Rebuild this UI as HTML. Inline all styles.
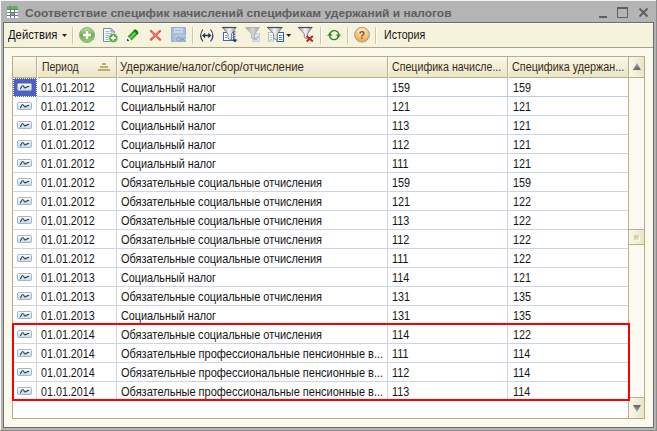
<!DOCTYPE html>
<html lang="ru"><head><meta charset="utf-8"><title>Соответствие специфик</title>
<style>
*{box-sizing:border-box;margin:0;padding:0}
html,body{width:657px;height:431px;overflow:hidden;background:#b4b4b4}
body{font-family:"Liberation Sans",Arial,sans-serif;font-size:12px;color:#141414;position:relative}
.abs{position:absolute}
#frame{position:absolute;left:0;top:0;width:657px;height:431px;background:#b4b4b4}
#hl-top{left:0;top:0;width:656px;height:1px;background:#f4f4f4}
#hl-left{left:0;top:0;width:1px;height:430px;background:#f4f4f4}
#sh-right{left:656px;top:0;width:1px;height:431px;background:#8c8c8c}
#sh-bottom{left:0;top:430px;width:657px;height:1px;background:#8c8c8c}
#inner{left:3px;top:22px;width:651px;height:406px;background:#fbf9ec;border:1px solid #6c6c6c}
#title{left:24.5px;top:5px;font-size:11.5px;font-weight:bold;color:#5e5e5e;white-space:nowrap;line-height:16px;transform-origin:0 0;transform:scaleX(1.04)}
#toolbar{left:4px;top:23px;width:649px;height:24px;background:#f5f2de;border-top:1px solid #fcfbf1}
#tbline{left:4px;top:47px;width:649px;height:1px;background:#aaa27c}
.tbtxt{position:absolute;top:28px;line-height:14px;white-space:nowrap;transform-origin:0 0;transform:scaleX(.9)}
.t{display:inline-block;transform-origin:0 0;transform:scaleX(.9)}
.sep{position:absolute;top:27px;width:2px;height:17px;border-left:1px solid #cfc8a8;border-right:1px solid #fffef8}
#table{left:12px;top:56px;width:633px;height:363px;background:#fff;border:1px solid #b5ad84}
#hdr{left:13px;top:57px;width:615px;height:20px;background:linear-gradient(#f9f6e5,#ebe5c8);border-top:1px solid #fcfbf2}
#hdrline{left:13px;top:77px;width:615px;height:1px;background:#b9b18a}
.hc{position:absolute;top:57px;height:20px;line-height:20px;white-space:nowrap;color:#3a2c14}
.hsep{position:absolute;top:57px;width:2px;height:21px;background:#b9b18a;border-right:1px solid #fbf9ee}
.row{position:absolute;left:13px;width:615px;height:19px;border-bottom:1px solid #cdd6e0}
.c{position:absolute;top:0;height:18px;line-height:20px;white-space:nowrap;overflow:hidden;border-right:1px solid #cdd6e0;padding-left:4px}
.c0{left:0;width:24px;padding:0}
.c1{left:24px;width:80px}
.c2{left:104px;width:271px}
.c3{left:375px;width:120px}
.c4{left:495px;width:120px;border-right:none;padding-left:4.5px}
.r0,.r0 .c{border-color:#b9caec}
.ri{position:absolute;left:4px;top:5px}
.c.sel{background:#4f60c4;outline:1px dotted #fff;outline-offset:-1px;height:19px;border-right:none}
#sb{left:628px;top:57px;width:16px;height:361px;background:#faf9f2;border-left:1px solid #b9b18a;}
.sbb{position:absolute;left:629px;width:15px;background:linear-gradient(90deg,#faf8ea,#e9e4c8)}
#red{left:12px;top:323px;width:618px;height:78px;border:2px solid #fe0000}
</style></head><body>
<div id="frame">
<div class="abs" id="hl-top"></div><div class="abs" id="hl-left"></div><div class="abs" id="sh-right"></div><div class="abs" id="sh-bottom"></div>
<div class="abs" id="inner"></div>
<!-- title icon -->
<svg class="abs" style="left:0;top:0" width="657" height="48" viewBox="0 0 657 48">
<defs>
<linearGradient id="gp" x1="0" y1="0" x2="0" y2="1"><stop offset="0" stop-color="#c0e0a4"/><stop offset="0.5" stop-color="#6cb24a"/><stop offset="1" stop-color="#98d076"/></linearGradient>
<linearGradient id="fn" x1="0" y1="0" x2="1" y2="0"><stop offset="0" stop-color="#8c9298"/><stop offset="0.5" stop-color="#f6f6f6"/><stop offset="1" stop-color="#8c9298"/></linearGradient>
<linearGradient id="fg" x1="0" y1="0" x2="1" y2="0"><stop offset="0" stop-color="#a8a8a8"/><stop offset="0.5" stop-color="#d4d4d4"/><stop offset="1" stop-color="#a8a8a8"/></linearGradient>
<linearGradient id="rg" x1="0" y1="0" x2="0" y2="1"><stop offset="0" stop-color="#ffffff"/><stop offset="1" stop-color="#bcdcf8"/></linearGradient>
<radialGradient id="hq" cx="0.5" cy="0.3" r="0.75"><stop offset="0" stop-color="#fef2dc"/><stop offset="0.5" stop-color="#f8c878"/><stop offset="1" stop-color="#ee9c38"/></radialGradient>
</defs>
<!-- title icon -->
<rect x="6.5" y="5.5" width="12" height="13" rx="1" fill="#fff" stroke="#9cb0cc"/>
<rect x="7" y="6" width="11" height="3" fill="#6cbc3c"/>
<rect x="11" y="13" width="3" height="2" fill="#6cbc3c"/>
<path d="M7 9.500H18M7 12.500H18M7 15.500H18M10.500 6V18M14.500 6V18" stroke="#6c7a8a" fill="none"/>
<!-- window buttons -->
<rect x="599" y="16" width="8" height="2" fill="#5e5e5e"/>
<path d="M617.500 8V17.500H627.500V8" fill="none" stroke="#5e5e5e"/><rect x="617" y="7" width="11" height="2" fill="#5e5e5e"/>
<path d="M639.500 8.500L647.500 16.500M647.500 8.500L639.500 16.500" stroke="#5e5e5e" stroke-width="1.8" fill="none"/>
</svg>
<div class="abs" id="title">Соответствие специфик начислений спецификам удержаний и налогов</div>

<div class="abs" id="toolbar"></div><div class="abs" id="tbline"></div>
<div class="tbtxt" style="left:8px;transform:scaleX(0.938)">Действия</div>
<div class="sep" style="left:72px"></div>
<div class="sep" style="left:192px"></div>
<div class="sep" style="left:320px"></div>
<div class="sep" style="left:347px"></div>
<div class="sep" style="left:375px"></div>
<div class="tbtxt" style="left:384px;transform:scaleX(0.885)">История</div>

<!-- icons -->
<svg class="abs" style="left:0;top:0" width="657" height="48" viewBox="0 0 657 48">
<path d="M62 34H67L64.500 37Z" fill="#2a2418"/>
<!-- add -->
<circle cx="87" cy="35" r="7.500" fill="url(#gp)" stroke="#93a88c"/>
<path d="M87 31V39M83 35H91" stroke="#fff" stroke-width="2.400"/>
<!-- copy -->
<path d="M103.500 28.500H111L114.500 32V41.500H103.500Z" fill="#f4f8fc" stroke="#6c8cb0"/>
<path d="M111 28.500V32H114.500Z" fill="#d4e2f0" stroke="#6c8cb0" stroke-width="0.800"/>
<path d="M105.500 31.500H109.500M105.500 33.500H112M105.500 35.500H109M105.500 37.500H108M105.500 39.500H108" stroke="#a4b8cc"/>
<circle cx="113.250" cy="38" r="4.600" fill="#58a83c" stroke="#d8ecd0" stroke-width="0.800"/>
<path d="M113.250 35.500V40.500M110.750 38H115.750" stroke="#fff" stroke-width="1.800"/>
<!-- pencil -->
<path d="M127.600 36.600L134.600 29.600Q137.500 29.500 138.400 33.400L131.400 40.400Z" fill="#2ea020"/>
<path d="M129.800 38.200L136.300 31.700" stroke="#84e06c" stroke-width="1.400"/>
<path d="M134.600 29.600Q137.500 29.500 138.400 33.400L137.200 34.600L133.400 30.800Z" fill="#1f7a18"/>
<path d="M127.600 36.600L131.400 40.400L127 41Z" fill="#f4fff0"/>
<path d="M127.300 38.600L129.400 40.700L127 41Z" fill="#103810"/>
<!-- delete -->
<path d="M151 31L160 39.600M160 31L151 39.600" stroke="#e25846" stroke-width="2.300" stroke-linecap="round"/>
<path d="M152 32L159 38.600M159 32L152 38.600" stroke="#f08878" stroke-width="0.800"/>
<!-- save -->
<rect x="171.500" y="27.500" width="14" height="14" fill="#a9bdd6" stroke="#98aeca"/>
<rect x="174" y="28" width="9" height="5" fill="#c8d6e6"/><path d="M175 30.500H182" stroke="#a9bdd6"/>
<rect x="175" y="35" width="11" height="7" fill="#b6c8dc"/>
<text x="176" y="41.500" font-family="Liberation Sans, sans-serif" font-weight="bold" font-size="7" fill="#7c94b8" textLength="9.500" lengthAdjust="spacingAndGlyphs">OK</text>
<!-- swap -->
<path d="M203 29.500Q198.300 35.500 203 41.500M210.500 29.500Q215.200 35.500 210.500 41.500" fill="none" stroke="#2c4660" stroke-width="1.150"/>
<path d="M204 35.500H209.500" stroke="#1f3a52" stroke-width="1.500"/>
<path d="M202 35.500L205.200 32.800V38.200ZM211.500 35.500L208.300 32.800V38.200Z" fill="#1f3a52"/>
<!-- filter by value -->
<rect x="223.500" y="32.500" width="10" height="8" fill="#fff" stroke="#3c64b0"/>
<path d="M225 35.500H227M225 37.500H227M231 35.500H232.500M231 37.500H232.500" stroke="#7c98c8"/>
<path d="M222.500 27.500H236L231.500 34V40L228 38.500V34Z" fill="url(#fn)" stroke="#6a7078" stroke-width="0.800"/>
<path d="M222.200 27.500H236.300" stroke="#444c54" stroke-width="1.200"/>
<path d="M234.800 31V40" stroke="#1c2c4c" stroke-dasharray="1.500 1"/>
<path d="M232.300 39.500H237.300L234.800 42.600Z" fill="#1c2c4c"/>
<!-- grey filter -->
<rect x="253" y="33.500" width="6.500" height="8" fill="#dce4ec" stroke="#c8d0d8"/>
<path d="M254.500 38L256 39.500L258.500 36" fill="none" stroke="#9cb4d0" stroke-width="1.200"/>
<path d="M245.500 27.500H259.500L254.500 34V39.500L251.500 38V34Z" fill="url(#fg)" stroke="#a8a8a8" stroke-width="0.800"/>
<!-- filter docs -->
<rect x="268.500" y="32.500" width="5" height="8.500" fill="#fff" stroke="#b4bcc4"/>
<path d="M270 35.500H272M270 37.500H272M270 39.500H272" stroke="#b8ccb0"/>
<rect x="277" y="32.500" width="6.500" height="9" fill="#fff" stroke="#2860b0"/>
<path d="M279 35.500H282.500M279 37.500H282.500M279 39.500H282.500" stroke="#5c88c8"/>
<path d="M267.500 27.500H282L277.300 34V40L273.800 38.500V34Z" fill="url(#fn)" stroke="#6a7078" stroke-width="0.800"/>
<path d="M267.200 27.500H282.300" stroke="#444c54" stroke-width="1.200"/>
<path d="M286.200 34H291.200L288.700 37Z" fill="#2a2418"/>
<!-- filter off -->
<path d="M298.500 27.500H312L307.300 34V39L304.300 37.500V34Z" fill="url(#fn)" stroke="#6a7078" stroke-width="0.800"/>
<path d="M298.200 27.500H312.300" stroke="#444c54" stroke-width="1.200"/>
<path d="M306.700 36L312.800 41.500M312.800 36L306.700 41.500" stroke="#c82018" stroke-width="1.900"/>
<!-- refresh -->
<path d="M329.900 33.700A4.600 4.600 0 0 1 338.800 34.600" fill="none" stroke="#2a8a22" stroke-width="1.400"/>
<path d="M338.500 36.600A4.600 4.600 0 0 1 329.600 35.400" fill="none" stroke="#2a8a22" stroke-width="1.400"/>
<path d="M335.900 34.400H341.100L338.500 37.800Z" fill="#2a8a22"/>
<path d="M327.100 35.800H332.500L329.800 32.400Z" fill="#2a8a22"/>
<!-- help -->
<circle cx="362" cy="34.700" r="7.400" fill="url(#hq)" stroke="#a4a09c"/>
<text x="362" y="39" text-anchor="middle" font-family="Liberation Sans, sans-serif" font-weight="bold" font-size="10.500" fill="#80501e">?</text>
</svg>

<!-- table -->
<div class="abs" id="table"></div>
<div class="abs" id="hdr"></div><div class="abs" id="hdrline"></div>
<div class="hsep" style="left:36px"></div><div class="hsep" style="left:116px"></div><div class="hsep" style="left:387px"></div><div class="hsep" style="left:507px"></div>
<div class="hc" style="left:42px"><span class="t" style="transform:scaleX(0.869)">Период</span></div>
<div class="hc" style="left:120px"><span class="t" style="transform:scaleX(0.948)">Удержание/налог/сбор/отчисление</span></div>
<div class="hc" style="left:392px"><span class="t" style="transform:scaleX(0.887)">Специфика начисле...</span></div>
<div class="hc" style="left:512px"><span class="t" style="transform:scaleX(0.9)">Специфика удержан...</span></div>
<div class="abs" style="left:102px;top:63px;width:4px;height:2px;background:#bcad6c"></div>
<div class="abs" style="left:100px;top:66px;width:8px;height:2px;background:#bcad6c"></div>
<div class="abs" style="left:98px;top:69px;width:12px;height:2px;background:#bcad6c"></div>
<div class="row r0" style="top:78px"><div class="c c0 sel"><svg class="ri" width="15" height="8" viewBox="0 0 16 9" preserveAspectRatio="none"><rect x="0.5" y="0.5" width="15" height="8" rx="1.5" fill="url(#rg)" stroke="#a6aaae"/><path d="M3.2 6.500C4.400 6.500 4.800 2.500 6.200 2.800C7.400 3 7.400 5.700 8.800 5.500C10 5.300 10.500 3.800 13 3.800" fill="none" stroke="#2c4a5c" stroke-width="1.350"/></svg></div><div class="c c1"><span class="t" style="transform:scaleX(0.895)">01.01.2012</span></div><div class="c c2"><span class="t" style="transform:scaleX(0.9)">Социальный налог</span></div><div class="c c3"><span class="t" style="transform:scaleX(0.9)">159</span></div><div class="c c4"><span class="t" style="transform:scaleX(0.9)">159</span></div></div>
<div class="row" style="top:97px"><div class="c c0"><svg class="ri" width="15" height="8" viewBox="0 0 16 9" preserveAspectRatio="none"><rect x="0.5" y="0.5" width="15" height="8" rx="1.5" fill="url(#rg)" stroke="#a6aaae"/><path d="M3.2 6.500C4.400 6.500 4.800 2.500 6.200 2.800C7.400 3 7.400 5.700 8.800 5.500C10 5.300 10.500 3.800 13 3.800" fill="none" stroke="#2c4a5c" stroke-width="1.350"/></svg></div><div class="c c1"><span class="t" style="transform:scaleX(0.895)">01.01.2012</span></div><div class="c c2"><span class="t" style="transform:scaleX(0.9)">Социальный налог</span></div><div class="c c3"><span class="t" style="transform:scaleX(0.9)">121</span></div><div class="c c4"><span class="t" style="transform:scaleX(0.9)">121</span></div></div>
<div class="row" style="top:116px"><div class="c c0"><svg class="ri" width="15" height="8" viewBox="0 0 16 9" preserveAspectRatio="none"><rect x="0.5" y="0.5" width="15" height="8" rx="1.5" fill="url(#rg)" stroke="#a6aaae"/><path d="M3.2 6.500C4.400 6.500 4.800 2.500 6.200 2.800C7.400 3 7.400 5.700 8.800 5.500C10 5.300 10.500 3.800 13 3.800" fill="none" stroke="#2c4a5c" stroke-width="1.350"/></svg></div><div class="c c1"><span class="t" style="transform:scaleX(0.895)">01.01.2012</span></div><div class="c c2"><span class="t" style="transform:scaleX(0.9)">Социальный налог</span></div><div class="c c3"><span class="t" style="transform:scaleX(0.9)">113</span></div><div class="c c4"><span class="t" style="transform:scaleX(0.9)">121</span></div></div>
<div class="row" style="top:135px"><div class="c c0"><svg class="ri" width="15" height="8" viewBox="0 0 16 9" preserveAspectRatio="none"><rect x="0.5" y="0.5" width="15" height="8" rx="1.5" fill="url(#rg)" stroke="#a6aaae"/><path d="M3.2 6.500C4.400 6.500 4.800 2.500 6.200 2.800C7.400 3 7.400 5.700 8.800 5.500C10 5.300 10.500 3.800 13 3.800" fill="none" stroke="#2c4a5c" stroke-width="1.350"/></svg></div><div class="c c1"><span class="t" style="transform:scaleX(0.895)">01.01.2012</span></div><div class="c c2"><span class="t" style="transform:scaleX(0.9)">Социальный налог</span></div><div class="c c3"><span class="t" style="transform:scaleX(0.9)">112</span></div><div class="c c4"><span class="t" style="transform:scaleX(0.9)">121</span></div></div>
<div class="row" style="top:154px"><div class="c c0"><svg class="ri" width="15" height="8" viewBox="0 0 16 9" preserveAspectRatio="none"><rect x="0.5" y="0.5" width="15" height="8" rx="1.5" fill="url(#rg)" stroke="#a6aaae"/><path d="M3.2 6.500C4.400 6.500 4.800 2.500 6.200 2.800C7.400 3 7.400 5.700 8.800 5.500C10 5.300 10.500 3.800 13 3.800" fill="none" stroke="#2c4a5c" stroke-width="1.350"/></svg></div><div class="c c1"><span class="t" style="transform:scaleX(0.895)">01.01.2012</span></div><div class="c c2"><span class="t" style="transform:scaleX(0.9)">Социальный налог</span></div><div class="c c3"><span class="t" style="transform:scaleX(0.9)">111</span></div><div class="c c4"><span class="t" style="transform:scaleX(0.9)">121</span></div></div>
<div class="row" style="top:173px"><div class="c c0"><svg class="ri" width="15" height="8" viewBox="0 0 16 9" preserveAspectRatio="none"><rect x="0.5" y="0.5" width="15" height="8" rx="1.5" fill="url(#rg)" stroke="#a6aaae"/><path d="M3.2 6.500C4.400 6.500 4.800 2.500 6.200 2.800C7.400 3 7.400 5.700 8.800 5.500C10 5.300 10.500 3.800 13 3.800" fill="none" stroke="#2c4a5c" stroke-width="1.350"/></svg></div><div class="c c1"><span class="t" style="transform:scaleX(0.895)">01.01.2012</span></div><div class="c c2"><span class="t" style="transform:scaleX(0.912)">Обязательные социальные отчисления</span></div><div class="c c3"><span class="t" style="transform:scaleX(0.9)">159</span></div><div class="c c4"><span class="t" style="transform:scaleX(0.9)">159</span></div></div>
<div class="row" style="top:192px"><div class="c c0"><svg class="ri" width="15" height="8" viewBox="0 0 16 9" preserveAspectRatio="none"><rect x="0.5" y="0.5" width="15" height="8" rx="1.5" fill="url(#rg)" stroke="#a6aaae"/><path d="M3.2 6.500C4.400 6.500 4.800 2.500 6.200 2.800C7.400 3 7.400 5.700 8.800 5.500C10 5.300 10.500 3.800 13 3.800" fill="none" stroke="#2c4a5c" stroke-width="1.350"/></svg></div><div class="c c1"><span class="t" style="transform:scaleX(0.895)">01.01.2012</span></div><div class="c c2"><span class="t" style="transform:scaleX(0.912)">Обязательные социальные отчисления</span></div><div class="c c3"><span class="t" style="transform:scaleX(0.9)">121</span></div><div class="c c4"><span class="t" style="transform:scaleX(0.9)">122</span></div></div>
<div class="row" style="top:211px"><div class="c c0"><svg class="ri" width="15" height="8" viewBox="0 0 16 9" preserveAspectRatio="none"><rect x="0.5" y="0.5" width="15" height="8" rx="1.5" fill="url(#rg)" stroke="#a6aaae"/><path d="M3.2 6.500C4.400 6.500 4.800 2.500 6.200 2.800C7.400 3 7.400 5.700 8.800 5.500C10 5.300 10.500 3.800 13 3.800" fill="none" stroke="#2c4a5c" stroke-width="1.350"/></svg></div><div class="c c1"><span class="t" style="transform:scaleX(0.895)">01.01.2012</span></div><div class="c c2"><span class="t" style="transform:scaleX(0.912)">Обязательные социальные отчисления</span></div><div class="c c3"><span class="t" style="transform:scaleX(0.9)">113</span></div><div class="c c4"><span class="t" style="transform:scaleX(0.9)">122</span></div></div>
<div class="row" style="top:230px"><div class="c c0"><svg class="ri" width="15" height="8" viewBox="0 0 16 9" preserveAspectRatio="none"><rect x="0.5" y="0.5" width="15" height="8" rx="1.5" fill="url(#rg)" stroke="#a6aaae"/><path d="M3.2 6.500C4.400 6.500 4.800 2.500 6.200 2.800C7.400 3 7.400 5.700 8.800 5.500C10 5.300 10.500 3.800 13 3.800" fill="none" stroke="#2c4a5c" stroke-width="1.350"/></svg></div><div class="c c1"><span class="t" style="transform:scaleX(0.895)">01.01.2012</span></div><div class="c c2"><span class="t" style="transform:scaleX(0.912)">Обязательные социальные отчисления</span></div><div class="c c3"><span class="t" style="transform:scaleX(0.9)">112</span></div><div class="c c4"><span class="t" style="transform:scaleX(0.9)">122</span></div></div>
<div class="row" style="top:249px"><div class="c c0"><svg class="ri" width="15" height="8" viewBox="0 0 16 9" preserveAspectRatio="none"><rect x="0.5" y="0.5" width="15" height="8" rx="1.5" fill="url(#rg)" stroke="#a6aaae"/><path d="M3.2 6.500C4.400 6.500 4.800 2.500 6.200 2.800C7.400 3 7.400 5.700 8.800 5.500C10 5.300 10.500 3.800 13 3.800" fill="none" stroke="#2c4a5c" stroke-width="1.350"/></svg></div><div class="c c1"><span class="t" style="transform:scaleX(0.895)">01.01.2012</span></div><div class="c c2"><span class="t" style="transform:scaleX(0.912)">Обязательные социальные отчисления</span></div><div class="c c3"><span class="t" style="transform:scaleX(0.9)">111</span></div><div class="c c4"><span class="t" style="transform:scaleX(0.9)">122</span></div></div>
<div class="row" style="top:268px"><div class="c c0"><svg class="ri" width="15" height="8" viewBox="0 0 16 9" preserveAspectRatio="none"><rect x="0.5" y="0.5" width="15" height="8" rx="1.5" fill="url(#rg)" stroke="#a6aaae"/><path d="M3.2 6.500C4.400 6.500 4.800 2.500 6.200 2.800C7.400 3 7.400 5.700 8.800 5.500C10 5.300 10.500 3.800 13 3.800" fill="none" stroke="#2c4a5c" stroke-width="1.350"/></svg></div><div class="c c1"><span class="t" style="transform:scaleX(0.895)">01.01.2013</span></div><div class="c c2"><span class="t" style="transform:scaleX(0.9)">Социальный налог</span></div><div class="c c3"><span class="t" style="transform:scaleX(0.9)">114</span></div><div class="c c4"><span class="t" style="transform:scaleX(0.9)">121</span></div></div>
<div class="row" style="top:287px"><div class="c c0"><svg class="ri" width="15" height="8" viewBox="0 0 16 9" preserveAspectRatio="none"><rect x="0.5" y="0.5" width="15" height="8" rx="1.5" fill="url(#rg)" stroke="#a6aaae"/><path d="M3.2 6.500C4.400 6.500 4.800 2.500 6.200 2.800C7.400 3 7.400 5.700 8.800 5.500C10 5.300 10.500 3.800 13 3.800" fill="none" stroke="#2c4a5c" stroke-width="1.350"/></svg></div><div class="c c1"><span class="t" style="transform:scaleX(0.895)">01.01.2013</span></div><div class="c c2"><span class="t" style="transform:scaleX(0.912)">Обязательные социальные отчисления</span></div><div class="c c3"><span class="t" style="transform:scaleX(0.9)">131</span></div><div class="c c4"><span class="t" style="transform:scaleX(0.9)">135</span></div></div>
<div class="row" style="top:306px"><div class="c c0"><svg class="ri" width="15" height="8" viewBox="0 0 16 9" preserveAspectRatio="none"><rect x="0.5" y="0.5" width="15" height="8" rx="1.5" fill="url(#rg)" stroke="#a6aaae"/><path d="M3.2 6.500C4.400 6.500 4.800 2.500 6.200 2.800C7.400 3 7.400 5.700 8.800 5.500C10 5.300 10.500 3.800 13 3.800" fill="none" stroke="#2c4a5c" stroke-width="1.350"/></svg></div><div class="c c1"><span class="t" style="transform:scaleX(0.895)">01.01.2013</span></div><div class="c c2"><span class="t" style="transform:scaleX(0.9)">Социальный налог</span></div><div class="c c3"><span class="t" style="transform:scaleX(0.9)">131</span></div><div class="c c4"><span class="t" style="transform:scaleX(0.9)">135</span></div></div>
<div class="row" style="top:325px"><div class="c c0"><svg class="ri" width="15" height="8" viewBox="0 0 16 9" preserveAspectRatio="none"><rect x="0.5" y="0.5" width="15" height="8" rx="1.5" fill="url(#rg)" stroke="#a6aaae"/><path d="M3.2 6.500C4.400 6.500 4.800 2.500 6.200 2.800C7.400 3 7.400 5.700 8.800 5.500C10 5.300 10.500 3.800 13 3.800" fill="none" stroke="#2c4a5c" stroke-width="1.350"/></svg></div><div class="c c1"><span class="t" style="transform:scaleX(0.895)">01.01.2014</span></div><div class="c c2"><span class="t" style="transform:scaleX(0.912)">Обязательные социальные отчисления</span></div><div class="c c3"><span class="t" style="transform:scaleX(0.9)">114</span></div><div class="c c4"><span class="t" style="transform:scaleX(0.9)">122</span></div></div>
<div class="row" style="top:344px"><div class="c c0"><svg class="ri" width="15" height="8" viewBox="0 0 16 9" preserveAspectRatio="none"><rect x="0.5" y="0.5" width="15" height="8" rx="1.5" fill="url(#rg)" stroke="#a6aaae"/><path d="M3.2 6.500C4.400 6.500 4.800 2.500 6.200 2.800C7.400 3 7.400 5.700 8.800 5.500C10 5.300 10.500 3.800 13 3.800" fill="none" stroke="#2c4a5c" stroke-width="1.350"/></svg></div><div class="c c1"><span class="t" style="transform:scaleX(0.895)">01.01.2014</span></div><div class="c c2"><span class="t" style="transform:scaleX(0.918)">Обязательные профессиональные пенсионные в...</span></div><div class="c c3"><span class="t" style="transform:scaleX(0.9)">111</span></div><div class="c c4"><span class="t" style="transform:scaleX(0.9)">114</span></div></div>
<div class="row" style="top:363px"><div class="c c0"><svg class="ri" width="15" height="8" viewBox="0 0 16 9" preserveAspectRatio="none"><rect x="0.5" y="0.5" width="15" height="8" rx="1.5" fill="url(#rg)" stroke="#a6aaae"/><path d="M3.2 6.500C4.400 6.500 4.800 2.500 6.200 2.800C7.400 3 7.400 5.700 8.800 5.500C10 5.300 10.500 3.800 13 3.800" fill="none" stroke="#2c4a5c" stroke-width="1.350"/></svg></div><div class="c c1"><span class="t" style="transform:scaleX(0.895)">01.01.2014</span></div><div class="c c2"><span class="t" style="transform:scaleX(0.918)">Обязательные профессиональные пенсионные в...</span></div><div class="c c3"><span class="t" style="transform:scaleX(0.9)">112</span></div><div class="c c4"><span class="t" style="transform:scaleX(0.9)">114</span></div></div>
<div class="row" style="top:382px"><div class="c c0"><svg class="ri" width="15" height="8" viewBox="0 0 16 9" preserveAspectRatio="none"><rect x="0.5" y="0.5" width="15" height="8" rx="1.5" fill="url(#rg)" stroke="#a6aaae"/><path d="M3.2 6.500C4.400 6.500 4.800 2.500 6.200 2.800C7.400 3 7.400 5.700 8.800 5.500C10 5.300 10.500 3.800 13 3.800" fill="none" stroke="#2c4a5c" stroke-width="1.350"/></svg></div><div class="c c1"><span class="t" style="transform:scaleX(0.895)">01.01.2014</span></div><div class="c c2"><span class="t" style="transform:scaleX(0.918)">Обязательные профессиональные пенсионные в...</span></div><div class="c c3"><span class="t" style="transform:scaleX(0.9)">113</span></div><div class="c c4"><span class="t" style="transform:scaleX(0.9)">114</span></div></div>
<!-- scrollbar -->
<div class="abs" id="sb"></div>
<div class="sbb" style="top:57px;height:21px;border-bottom:1px solid #b9b18a"></div>
<svg class="abs" style="left:633px;top:63px" width="8" height="7" viewBox="0 0 8 7"><defs><linearGradient id="ag" x1="0" y1="0" x2="0" y2="1"><stop offset="0" stop-color="#a4a4a4"/><stop offset="1" stop-color="#646464"/></linearGradient></defs><path d="M4 0L8 7H0Z" fill="url(#ag)"/></svg>
<div class="sbb" style="top:229px;height:16px;border-top:1px solid #b9b18a;border-bottom:1px solid #b9b18a"></div>
<div class="abs" style="left:634px;top:235px;width:5px;height:5px;border-radius:3px;background:#dcd6ba;box-shadow:inset 1px 1px 0 #cfc8a8, 1px 1px 0 #fffef4"></div>
<div class="sbb" style="top:397px;height:21px;border-top:1px solid #b9b18a"></div>
<svg class="abs" style="left:633px;top:405px" width="8" height="7" viewBox="0 0 8 7"><defs><linearGradient id="ag2" x1="0" y1="0" x2="0" y2="1"><stop offset="0" stop-color="#646464"/><stop offset="1" stop-color="#acacac"/></linearGradient></defs><path d="M0 0H8L4 7Z" fill="url(#ag2)"/></svg>
<div class="abs" id="red"></div>
</div>
</body></html>
